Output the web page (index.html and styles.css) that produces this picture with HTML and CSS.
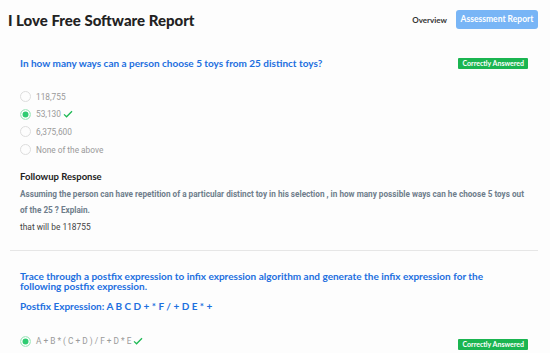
FILE: index.html
```html
<!DOCTYPE html>
<html>
<head>
    <title>I Love Free Software Report</title>
    <link rel="stylesheet" href="styles.css">
</head>
<body>
    <div class="header">
        <h1 class="title">I Love Free Software Report</h1>
        <div class="nav">
            <a class="nav-link" href="#">Overview</a>
            <a class="nav-btn" href="#">Assessment Report</a>
        </div>
    </div>

    <div class="question">
        <div class="question-head">
            <h3 class="question-text">In how many ways can a person choose 5 toys from 25 distinct toys?</h3>
            <span class="badge">Correctly Answered</span>
        </div>
        <ul class="options">
            <li class="option"><span class="radio"></span>118,755</li>
            <li class="option"><span class="radio checked"></span>53,130<svg class="tick" viewBox="0 0 12 10"><path d="M1 5.5 L4.2 8.5 L11 1.5" fill="none" stroke="#1db954" stroke-width="1.6"/></svg></li>
            <li class="option"><span class="radio"></span>6,375,600</li>
            <li class="option"><span class="radio"></span>None of the above</li>
        </ul>
        <div class="followup">
            <h4 class="followup-title">Followup Response</h4>
            <p class="followup-question">Assuming the person can have repetition of a particular distinct toy in his selection , in how many possible ways can he choose 5 toys out of the 25 ? Explain.</p>
            <p class="followup-answer">that will be 118755</p>
        </div>
    </div>

    <hr class="divider">

    <div class="question">
        <h3 class="question-text wide">Trace through a postfix expression to infix expression algorithm and generate the infix expression for the following postfix expression.</h3>
        <h3 class="question-text expr">Postfix Expression: A B C D + * F / + D E * +</h3>
        <div class="answer-row">
            <div class="option"><span class="radio checked"></span>A + B * ( C + D ) / F + D * E<svg class="tick" viewBox="0 0 12 10"><path d="M1 5.5 L4.2 8.5 L11 1.5" fill="none" stroke="#1db954" stroke-width="1.6"/></svg></div>
            <span class="badge">Correctly Answered</span>
        </div>
    </div>
</body>
</html>
```

FILE: styles.css
```css
body {
    margin: 0;
    padding: 0 12px 0 8px;
    background-color: #fdfdfd;
    font-family: Roboto, sans-serif;
    color: #333;
}

.header {
    display: flex;
    justify-content: space-between;
    align-items: center;
    height: 39px;
}

.title {
    margin: 0;
    font-family: Lato, sans-serif;
    font-size: 15px;
    font-weight: 900;
    color: #222;
}

.nav {
    display: flex;
    align-items: center;
    gap: 9px;
}

.nav-link {
    font-family: Lato, sans-serif;
    font-size: 8px;
    font-weight: 700;
    color: #333;
    text-decoration: none;
}

.nav-btn {
    display: block;
    width: 82px;
    height: 19px;
    line-height: 19px;
    text-align: center;
    background-color: #78b5f6;
    color: white;
    border-radius: 3px;
    font-family: Lato, sans-serif;
    font-size: 8.5px;
    font-weight: 700;
    text-decoration: none;
}

.question {
    padding: 0 2px 0 12px;
}

.question-head {
    display: flex;
    justify-content: space-between;
    align-items: center;
    margin-top: 19px;
    padding-right: 8px;
}

.question-text {
    margin: 0;
    font-family: Lato, sans-serif;
    font-size: 10px;
    font-weight: 700;
    color: #1c6fdf;
    line-height: 11px;
}

.question-text.wide {
    margin-top: 21px;
    padding-right: 40px;
    line-height: 9.5px;
}

.question-text.expr {
    margin-top: 10px;
}

.badge {
    display: inline-block;
    padding: 0 4px;
    height: 11px;
    line-height: 11px;
    background-color: #1bb551;
    color: white;
    font-family: Lato, sans-serif;
    font-size: 7px;
    font-weight: 700;
    border-radius: 1px;
}

.options {
    list-style: none;
    margin: 19px 0 0;
    padding: 0;
}

.option {
    display: flex;
    align-items: center;
    height: 17.6px;
    font-size: 8.3px;
    color: #9a9a9a;
}

.radio {
    width: 9px;
    height: 9px;
    border: 1px solid #ddd;
    border-radius: 50%;
    margin-right: 5px;
    box-sizing: content-box;
    flex-shrink: 0;
}

.radio.checked {
    background-color: #2ecc71;
    border-color: #a6e8c0;
    box-shadow: inset 0 0 0 1.5px white;
    background-clip: content-box;
}

.tick {
    width: 10px;
    height: 8px;
    margin-left: 2px;
}

.followup {
    margin-top: 13px;
}

.followup-title {
    margin: 0;
    font-family: Lato, sans-serif;
    font-size: 9.5px;
    font-weight: 700;
    color: #222;
}

.followup-question {
    margin: 4px 0 0;
    padding-right: 12px;
    font-size: 8.2px;
    font-weight: 700;
    color: #6f7d8c;
    line-height: 16px;
}

.followup-answer {
    margin: 4px 0 0;
    font-size: 8.4px;
    color: #444;
}

.divider {
    margin: 18px 0 0 2px;
    border: none;
    border-top: 1px solid #e6e6e6;
}

.answer-row {
    display: flex;
    justify-content: space-between;
    align-items: flex-end;
    margin-top: 20px;
    padding-right: 8px;
}
```
